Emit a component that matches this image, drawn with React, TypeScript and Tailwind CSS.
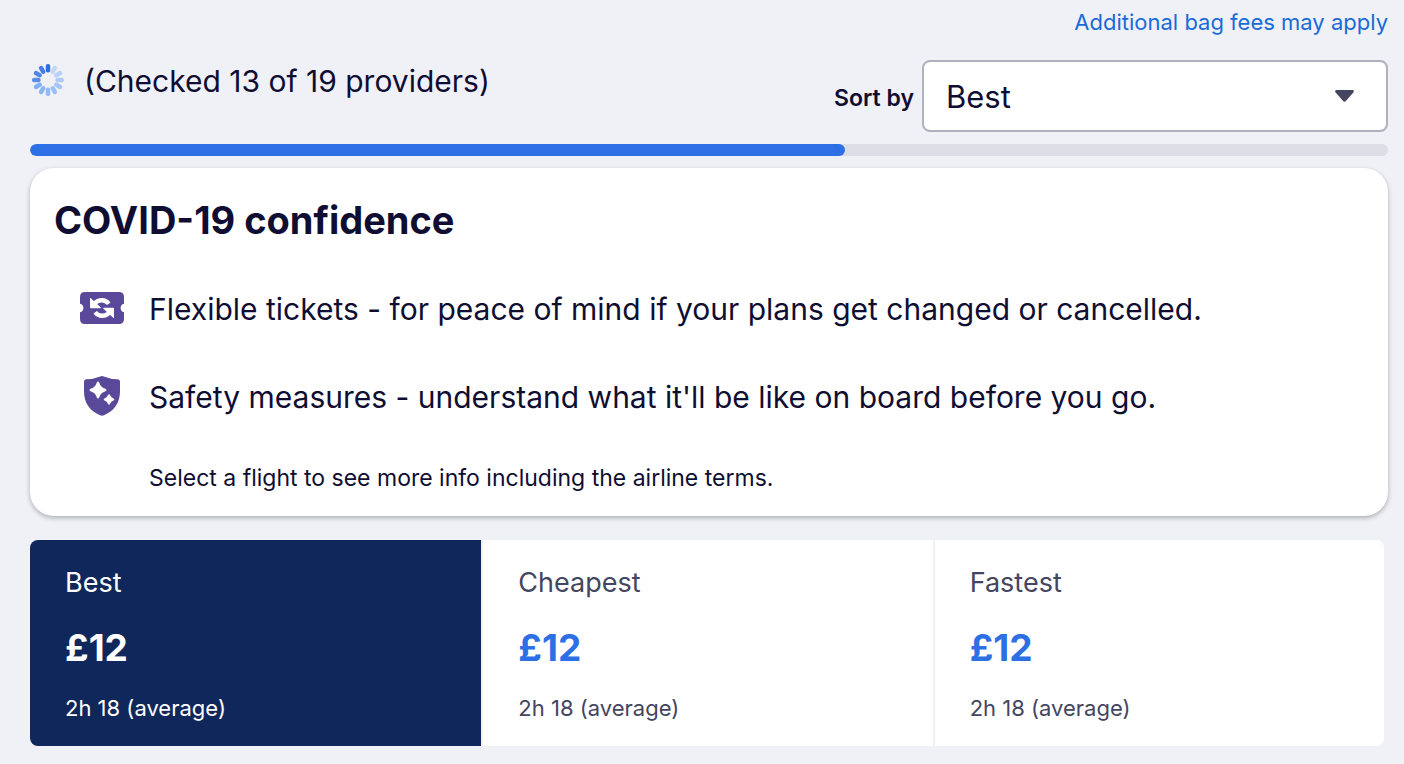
const SPOKES = Array.from({ length: 12 }, (_, i) => i);

function Spinner() {
  return (
    <svg className="size-8 shrink-0" viewBox="0 0 32 32" role="img" aria-label="Loading">
      {SPOKES.map((i) => (
        <rect
          key={i}
          x="13.800"
          y="0"
          width="4.400"
          height="8.600"
          rx="2"
          fill={i < 4 ? "#2a6ee0" : "#4f93f5"}
          opacity={i === 0 ? 1 : 0.94 - i * 0.06}
          transform={`rotate(${-30 * i} 16 16)`}
        />
      ))}
    </svg>
  );
}

function TicketIcon() {
  return (
    <svg className="w-11 shrink-0" viewBox="0 0 44 32" aria-hidden="true">
      <path
        fill="#5a489b"
        d="M5 0H39Q44 0 44 5V11.8A4.3 4.3 0 0 0 44 20.2V27Q44 32 39 32H5Q0 32 0 27V20.2A4.3 4.3 0 0 0 0 11.8V5Q0 0 5 0Z"
      />
      <g fill="none" stroke="#fff" strokeWidth="4.4">
        <path d="M28.8 11.8C25.4 7.200 18.600 7 14.800 11.400" />
        <path d="M15.200 20.200C18.600 24.800 25.400 25 29.200 20.600" />
      </g>
      <path
        fill="#fff"
        d="M10 6.200Q10.300 5.700 10.800 6.200L20.600 15.200Q21.200 16 20.200 16.200H10.800Q10 16.200 10 15.400ZM34 25.800Q33.700 26.300 33.200 25.800L23.400 16.800Q22.800 16 23.800 15.800H33.200Q34 15.800 34 16.600Z"
      />
    </svg>
  );
}

function ShieldIcon() {
  return (
    <svg className="w-9 shrink-0" viewBox="0 0 36 40" aria-hidden="true">
      <path
        fill="#5a489b"
        d="M16.2 .4Q18 -.2 19.8 .4Q26 3 33.8 3.2Q36 3.4 36 5.4V15C36 27 30.5 34.5 20 39.3Q18 40.2 16 39.3C5.500 34.5 0 27 0 15V5.400Q0 3.400 2.200 3.200Q10 3 16.200 .4Z"
      />
      <path
        fill="#fff"
        d="M14 5.600Q14.900 5.600 15.200 6.500Q16.600 11.400 21.500 12.800Q22.500 13.100 22.500 14Q22.500 14.900 21.500 15.200Q16.600 16.600 15.200 21.500Q14.900 22.500 14 22.500Q13.100 22.500 12.800 21.500Q11.400 16.600 6.500 15.200Q5.500 14.900 5.500 14Q5.500 13.100 6.500 12.800Q11.400 11.400 12.800 6.500Q13.100 5.600 14 5.600ZM25 18.200Q25.700 18.200 26 19Q26.900 21.600 29.500 22.500Q30.300 22.800 30.300 23.500Q30.300 24.200 29.500 24.500Q26.900 25.400 26 28Q25.700 28.800 25 28.800Q24.300 28.800 24 28Q23.100 25.400 20.500 24.500Q19.700 24.200 19.700 23.500Q19.700 22.800 20.500 22.500Q23.100 21.600 24 19Q24.300 18.200 25 18.200Z"
      />
    </svg>
  );
}

const OPTIONS = [
  { name: "Best", price: "£12", duration: "2h 18 (average)" },
  { name: "Cheapest", price: "£12", duration: "2h 18 (average)" },
  { name: "Fastest", price: "£12", duration: "2h 18 (average)" },
];

export default function App() {
  return (
    <main className="min-h-screen bg-[#f0f1f7] pr-4 pb-4 pl-[30px] font-['Inter','Liberation_Sans',sans-serif] text-[#0f0e32]">
      <div className="flex justify-end pt-1.5">
        <a href="#bag-fees" className="text-[22px] leading-8 text-[#186bd8]">
          Additional bag fees may apply
        </a>
      </div>

      <header className="mt-[22px] flex items-start justify-between">
        <div className="ml-0.5 flex gap-5" role="status">
          <span className="pt-1">
            <Spinner />
          </span>
          <p className="text-[30px] leading-[42px]">(Checked 13 of 19 providers)</p>
        </div>
        <div className="flex items-center gap-2">
          <label htmlFor="sort" className="pt-1 text-[23px] font-semibold">
            Sort by
          </label>
          <div className="relative w-[466px]">
            <select
              id="sort"
              className="h-[72px] w-full appearance-none rounded-lg border-2 border-[#b1b0bf] bg-white pt-0.5 pl-[22px] text-[31px]"
            >
              <option>Best</option>
              <option>Cheapest</option>
              <option>Fastest</option>
            </select>
            <svg className="pointer-events-none absolute top-[30px] right-[34px] h-3 w-[19px]" viewBox="0 0 19 12" aria-hidden="true">
              <path fill="#444560" d="M1.300 0H17.700Q19.600 .6 18.500 2.200L10.900 11Q9.500 12.500 8.100 11L.5 2.200Q-.6 .6 1.300 0Z" />
            </svg>
          </div>
        </div>
      </header>

      <div
        className="mt-3 h-3 overflow-hidden rounded-full bg-[#dddde5]"
        role="progressbar"
        aria-label="Providers checked"
        aria-valuenow={60}
        aria-valuemin={0}
        aria-valuemax={100}
      >
        <div className="h-full w-[60%] rounded-full bg-[#2d6fe4]" />
      </div>

      <section className="mt-3 rounded-3xl bg-white px-6 pt-7 pb-5 shadow-[0_2px_5px_rgba(0,0,0,0.28)]">
        <h2 className="text-[38px] leading-[48px] font-bold">COVID-19 confidence</h2>
        <ul className="mt-10 flex flex-col gap-10">
          <li className="flex items-center gap-[25px]">
            <span className="flex w-[70px] justify-end">
              <TicketIcon />
            </span>
            <span className="pt-0.5 text-[30px] leading-[46px]">
              Flexible tickets - for peace of mind if your plans get changed or cancelled.
            </span>
          </li>
          <li className="flex items-center gap-[25px]">
            <span className="flex w-[70px] justify-end pr-1">
              <ShieldIcon />
            </span>
            <span className="pt-0.5 text-[30px] leading-[46px]">
              Safety measures - understand what it'll be like on board before you go.
            </span>
          </li>
        </ul>
        <p className="mt-10 ml-[95px] text-[23px] leading-9">
          Select a flight to see more info including the airline terms.
        </p>
      </section>

      <div className="mt-6 mr-1 grid grid-cols-3 overflow-hidden rounded-lg bg-white">
        {OPTIONS.map((o, i) => (
          <button
            key={o.name}
            type="button"
            aria-pressed={i === 0}
            className={
              i === 0
                ? "bg-[#0f275a] px-[35px] pt-[25px] pb-5 text-left text-white"
                : "border-l-2 border-[#eff1f8] px-[35px] pt-[25px] pb-5 text-left text-[#444560]"
            }
          >
            <span className="block text-[27px] leading-9">{o.name}</span>
            <span
              className={
                i === 0
                  ? "mt-[23px] block text-[37px] leading-[48px] font-bold"
                  : "mt-[23px] block text-[37px] leading-[48px] font-bold text-[#2d6fe4]"
              }
            >
              {o.price}
            </span>
            <span className="mt-[18px] block text-[22px] leading-9">{o.duration}</span>
          </button>
        ))}
      </div>
    </main>
  );
}
